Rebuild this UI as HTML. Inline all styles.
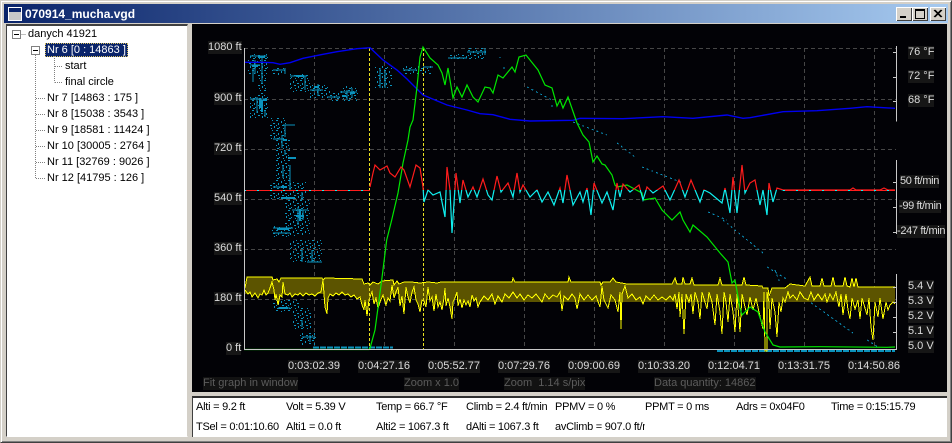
<!DOCTYPE html>
<html><head><meta charset="utf-8"><title>070914_mucha.vgd</title>
<style>
html,body{margin:0;padding:0}
body{width:952px;height:443px;background:#d4d0c8;position:relative;overflow:hidden;font-family:"Liberation Sans",sans-serif;font-size:11px;color:#000}
.a{position:absolute}
#frame{left:0;top:0;width:952px;height:443px;box-sizing:border-box;border-top:1px solid #d4d0c8;border-left:1px solid #d4d0c8;border-right:1px solid #404040;border-bottom:1px solid #404040;box-shadow:inset 1px 1px 0 #fff,inset -1px -1px 0 #808080}
#title{left:4px;top:4px;width:944px;height:19px;background:linear-gradient(90deg,#0a246a,#a6caf0)}
#tt{left:25px;top:7px;color:#fff;font-weight:bold;font-size:12px;line-height:14px;white-space:pre}
.btn{top:7px;width:16px;height:14px;box-sizing:border-box;background:#d4d0c8;box-shadow:inset 1px 1px 0 #fff,inset -1px -1px 0 #404040}
#tree{left:6px;top:24px;width:182px;height:413px;box-sizing:border-box;background:#fff;border-top:2px solid #404040;border-left:1px solid #404040;border-right:1px solid #d4d0c8;border-bottom:1px solid #fff}
#graph{left:192px;top:24px;width:755px;height:368px;background:#020206}
#status{left:192px;top:396px;width:755px;height:41px;box-sizing:border-box;background:#fff;border-top:2px solid #303030;border-left:1px solid #404040;overflow:hidden}
.t{position:absolute;white-space:pre;line-height:14px;height:14px}
.g{position:absolute;white-space:pre;line-height:13px;color:#dcdcdc;background:#161616}
.c{letter-spacing:-.35px}
.d{position:absolute;white-space:pre;line-height:13px;color:#5c5c5c;background:#121212}
.s{position:absolute;white-space:pre;line-height:14px;letter-spacing:-.25px}
svg{position:absolute;left:0;top:0}
</style></head><body>
<div class="a" id="frame"></div>
<div class="a" id="title"></div>
<svg width="952" height="24" style="z-index:2">
<rect x="8.5" y="7.5" width="13" height="13" fill="#d4d0c8" stroke="#fff"/>
<rect x="9" y="8" width="12" height="4" fill="#0a246a"/>
<rect x="9" y="12" width="12" height="8" fill="#c8c8c8"/>
</svg>
<div class="a" id="tt" style="z-index:3">070914_mucha.vgd</div>
<div class="a btn" style="left:896px"></div>
<div class="a btn" style="left:912px"></div>
<div class="a btn" style="left:930px"></div>
<svg width="952" height="24" style="z-index:4" shape-rendering="crispEdges">
<rect x="900" y="16" width="6" height="2" fill="#000"/>
<rect x="915.5" y="9.5" width="9" height="9" fill="none" stroke="#000"/><rect x="915" y="9" width="10" height="2" fill="#000"/>
<path d="M934 10l7 7M935 10l7 7M941 10l-7 7M942 10l-7 7" stroke="#000" stroke-width="1" shape-rendering="auto"/>
</svg>

<div class="a" id="tree"></div>
<div class="a" style="left:45px;top:43px;width:83px;height:14px;background:#0a246a;outline:1px dotted #d8c060;outline-offset:-1px"></div>
<svg width="200" height="200" style="z-index:2" shape-rendering="crispEdges">
<g fill="none" stroke="#808080" stroke-dasharray="1 1">
<path d="M21.5 34.5H26M35.5 55V178.5M36 98.5H45M36 114.5H45M36 130.5H45M36 146.5H45M36 162.5H45M36 178.5H45M54.5 56V82.5M55 66.5H63M55 82.5H63"/>
</g>
<rect x="12.5" y="30.5" width="8" height="8" fill="#fff" stroke="#808080"/><path d="M14 34.5h5" stroke="#000"/>
<rect x="31.5" y="46.5" width="8" height="8" fill="#fff" stroke="#808080"/><path d="M33 50.5h5" stroke="#000"/>
</svg>
<div style="z-index:3;position:absolute;left:0;top:0">
<span class="t" style="left:28px;top:27px">danych 41921</span>
<span class="t" style="left:47px;top:43px;color:#fff">Nr 6 [0 : 14863 ]</span>
<span class="t" style="left:65px;top:59px">start</span>
<span class="t" style="left:65px;top:75px">final circle</span>
<span class="t" style="left:47px;top:91px">Nr 7 [14863 : 175 ]</span>
<span class="t" style="left:47px;top:107px">Nr 8 [15038 : 3543 ]</span>
<span class="t" style="left:47px;top:123px">Nr 9 [18581 : 11424 ]</span>
<span class="t" style="left:47px;top:139px">Nr 10 [30005 : 2764 ]</span>
<span class="t" style="left:47px;top:155px">Nr 11 [32769 : 9026 ]</span>
<span class="t" style="left:47px;top:171px">Nr 12 [41795 : 126 ]</span>
</div>

<div class="a" id="graph"></div>
<div style="position:absolute;left:0;top:0">
<span class="g" style="left:208px;top:41px">1080 ft</span>
<span class="g" style="left:214px;top:92px">900 ft</span>
<span class="g" style="left:214px;top:142px">720 ft</span>
<span class="g" style="left:214px;top:192px">540 ft</span>
<span class="g" style="left:214px;top:242px">360 ft</span>
<span class="g" style="left:214px;top:292px">180 ft</span>
<span class="g" style="left:226px;top:342px">0 ft</span>
<span class="g" style="left:908px;top:46px">76 °F</span>
<span class="g" style="left:908px;top:70px">72 °F</span>
<span class="g" style="left:908px;top:94px">68 °F</span>
<span class="g c" style="left:900px;top:175px">50 ft/min</span>
<span class="g c" style="left:899px;top:200px">-99 ft/min</span>
<span class="g c" style="left:897px;top:225px">-247 ft/min</span>
<span class="g" style="left:908px;top:280px">5.4 V</span>
<span class="g" style="left:908px;top:295px">5.3 V</span>
<span class="g" style="left:908px;top:310px">5.2 V</span>
<span class="g" style="left:908px;top:325px">5.1 V</span>
<span class="g" style="left:908px;top:340px">5.0 V</span>
<span class="g" style="left:288px;top:360px">0:03:02.39</span>
<span class="g" style="left:358px;top:360px">0:04:27.16</span>
<span class="g" style="left:428px;top:360px">0:05:52.77</span>
<span class="g" style="left:498px;top:360px">0:07:29.76</span>
<span class="g" style="left:568px;top:360px">0:09:00.69</span>
<span class="g" style="left:638px;top:360px">0:10:33.20</span>
<span class="g" style="left:708px;top:360px">0:12:04.71</span>
<span class="g" style="left:778px;top:360px">0:13:31.75</span>
<span class="g" style="left:848px;top:360px">0:14:50.86</span>
<span class="d" style="left:203px;top:377px">Fit graph in window</span>
<span class="d" style="left:404px;top:377px">Zoom x 1.0</span>
<span class="d" style="left:504px;top:377px">Zoom  1.14 s/pix</span>
<span class="d" style="left:654px;top:377px">Data quantity: 14862</span>
</div>

<svg width="952" height="443" viewBox="0 0 952 443" fill="none">
<defs>
<clipPath id="up"><rect x="240" y="0" width="660" height="190"/></clipPath>
<clipPath id="dn"><rect x="240" y="190" width="660" height="200"/></clipPath>
<clipPath id="band"><path d="M245 288L247 277H272L273 280L277 279L279 282L281 278H322L323 280L325 278L362 279L364 284L368 283L370 285L373 282L378 284L382 281L393 280L394 285L397 281L399 284L404 282L411 282L420 283L428 282L437 283L441 282L512 282L513 278L515 282L568 282L569 277L571 282L600 282L601 285L603 282L610 282L613 278L616 282L627 284L672 284L675 278L677 284L682 284L683 277L685 284L690 284L692 278L694 285L718 285L720 278L722 285L742 285L744 277L746 285L762 286L763 288L768 288L769 296L772 288L785 288L790 284L805 286L810 277L812 286L820 286L822 278L824 286L831 286L833 277L835 286L843 286L845 277L847 286L850 287L852 278L854 287L856 278L858 287L895 287V360H245Z"/></clipPath>
<pattern id="sc" width="12" height="10" patternUnits="userSpaceOnUse" fill="#0b92bc" shape-rendering="crispEdges">
<rect x="0" y="0" width="2" height="1"/><rect x="5" y="1" width="1" height="2"/><rect x="8" y="0" width="1" height="1"/><rect x="2" y="3" width="1" height="2"/><rect x="9" y="3" width="2" height="1"/><rect x="0" y="5" width="1" height="1"/><rect x="6" y="5" width="2" height="1"/><rect x="3" y="7" width="1" height="1"/><rect x="10" y="6" width="1" height="2"/><rect x="1" y="8" width="2" height="1"/><rect x="7" y="8" width="1" height="1"/>
</pattern>
</defs>
<g shape-rendering="crispEdges" stroke="#464646" stroke-dasharray="4 3">
<path d="M244 48.5H896M244 99.5H896M244 149.5H896M244 199.5H896M244 249.5H896M244 299.5H896"/>
<path d="M314.5 48V349M384.5 48V349M454.5 48V349M524.5 48V349M594.5 48V349M664.5 48V349M734.5 48V349M804.5 48V349M874.5 48V349"/>
</g>
<path fill="url(#sc)" d="M248 54H268V74H248ZM250 97H268V118H250ZM258 74H266V97H258ZM270 118H286V140H270ZM276 140H290V182H276ZM270 182H306V200H270ZM285 200H310V235H285ZM272 226H295V237H272ZM290 240H322V262H290ZM273 300H300V312H273ZM293 308H312V330H293ZM300 333H316V345H300ZM272 68H285V75H272ZM290 74H310V92H290ZM310 85H330V98H310ZM327 93H358V101H327ZM340 86H358V96H340ZM375 66H392V88H375ZM402 66H432V74H402ZM448 54H486V60H448ZM468 48H486V56H468Z"/>
<g shape-rendering="crispEdges" stroke="#0b92bc">
<path d="M250 56h17M250 65h10M255 60v14M262 58v26M253 68v14M273 70h12M285 68v6M290 76h17M305 76v14M310 90h13M318 84v12M327 97h13M340 92h17M347 90v10M352 88v10M250 99h17M257 97v16M265 110v7M283 125h12M285 125v12M273 139h10M380 68v20M385 70v18M403 70h14M423 67h10M448 58h19M467 52h18M485 48v7M282 135v13M285 150v5M283 165v13M290 165v25M273 187h14M302 192v8M298 207v18M292 210h16M303 210v10M273 228h20M273 233h17M302 250v12M307 262h15M312 250v12M278 308h12M302 320v7M302 337h13M310 335v7"/>
<path stroke-width="2" d="M258 57h7M252 66h6M260 98v10M262 100v12M277 229h12M283 140h4M288 158h8M281 187h6M281 198h14M296 216h8M300 209v12M279 308h9M263 100h4M350 93h5M314 87h5M296 76h8M342 96h4"/>
<path stroke-dasharray="2 3" stroke-width="1" d="M500 57v1M503 68l5 0M527 87L552 100M552 105v2M573 122L607 135M617 143L635 157M642 167L683 183M708 212L727 220M723 220L763 253M767 267L788 280M775 270L780 283M803 297L853 333M867 340L878 347"/>
<path stroke-width="2" stroke-dasharray="6 1" d="M313 347.500H393M717 351H895"/>
</g>
<g transform="translate(0,2)">
<rect clip-path="url(#band)" transform="translate(0,-2)" x="245" y="270" width="651" height="24" fill="#5c5400"/>
<path clip-path="url(#band)" fill="#5c5400" d="M245 288L248 292L250 290L252 295L255 291L258 296L260 292L262 293L264 288L266 293L268 291L270 286L272 280L274 288L275 298L276 292L278 303L280 293L282 295L283 280L285 292L288 293L290 291L292 295L295 292L298 293L300 291L303 294L306 291L309 293L312 292L315 294L318 291L321 290L323 278L324 292L325 305L327 312L328 296L330 292L333 294L336 291L339 293L342 290L345 293L348 292L351 295L354 293L357 297L360 295L362 303L364 308L365 298L367 314L369 298L372 290L374 302L376 296L378 306L380 300L383 293L386 303L388 296L390 299L392 283L394 296L396 290L398 285L400 304L402 294L404 312L406 285L408 295L410 301L412 290L414 285L416 298L418 302L420 310L422 298L424 299L426 305L428 285L430 299L432 295L434 309L436 292L438 305L440 300L442 308L444 296L445 286L446 304L448 296L450 305L452 317L453 300L455 296L457 290L458 304L460 297L462 306L464 298L466 303L468 299L470 305L472 293L474 299L476 296L478 305L480 300L895 300V260H245Z"/>
<path stroke="#ffff00" stroke-width="1" shape-rendering="crispEdges" d="M245 288L248 292L250 290L252 295L255 291L258 296L260 292L262 293L264 288L266 293L268 291L270 286L272 280L274 288L275 298L276 292L278 303L280 293L282 295L283 280L285 292L288 293L290 291L292 295L295 292L298 293L300 291L303 294L306 291L309 293L312 292L315 294L318 291L321 290L323 278L324 292L325 305L327 312L328 296L330 292L333 294L336 291L339 293L342 290L345 293L348 292L351 295L354 293L357 297L360 295L362 303L364 308L365 298L367 314L369 298L372 290L374 302L376 296L378 306L380 300L383 293L386 303L388 296L390 299L392 283L394 296L396 290L398 285L400 304L402 294L404 312L406 285L408 295L410 301L412 290L414 285L416 298L418 302L420 310L422 298L424 299L426 305L428 285L430 299L432 295L434 309L436 292L438 305L440 300L442 308L444 296L445 286L446 304L448 296L450 305L452 317L453 300L455 296L457 290L458 304L460 297L462 306L464 298L466 303L468 299L470 305L472 293L474 299L476 296L478 305L480 300L484 294L488 298L492 292L495 302L498 294L502 300L505 292L509 296L513 290L517 296L520 292L524 298L528 293L532 296L536 292L539 296L542 300L545 292L549 297L553 293L557 295L560 290L562 309L564 294L568 298L572 292L575 296L577 307L580 292L584 298L588 293L592 298L596 294L600 305L602 284L604 298L608 306L611 293L615 298L618 310L620 290L621 327L622 292L625 284L628 296L632 292L636 298L640 295L643 302L646 294L650 298L654 293L658 298L662 295L666 298L670 294L673 298L675 292L677 307L679 290L680 315L682 292L684 332L686 292L689 300L691 292L693 312L695 290L698 300L700 317L702 290L705 300L707 307L709 290L712 300L715 323L717 292L720 310L722 332L724 290L726 300L728 320L730 292L733 310L735 330L737 292L740 330L742 292L745 305L747 313L750 295L753 308L756 296L759 310L763 327L764 290L765 349H767V290L769 300L770 327L772 296L775 310L777 335L779 300L781 310L783 296L785 300L788 290L790 296L793 293L797 298L800 290L804 296L808 298L811 290L814 298L818 292L822 298L825 292L827 300L830 292L833 298L836 290L839 305L841 292L843 313L846 292L848 308L850 317L852 296L855 307L858 298L860 317L862 296L865 306L867 313L869 296L871 325L873 338L875 300L877 310L878 315L880 296L883 317L886 300L888 308L890 303L893 300L895 302"/>
</g>
<path stroke="#ffff00" stroke-width="1" shape-rendering="crispEdges" d="M245 288L247 277H272L273 280L277 279L279 282L281 278H322L323 280L325 278L362 279L364 284L368 283L370 285L373 282L378 284L382 281L393 280L394 285L397 281L399 284L404 282L411 282L420 283L428 282L437 283L441 282L512 282L513 278L515 282L568 282L569 277L571 282L600 282L601 285L603 282L610 282L613 278L616 282L627 284L672 284L675 278L677 284L682 284L683 277L685 284L690 284L692 278L694 285L718 285L720 278L722 285L742 285L744 277L746 285L762 286L763 288L768 288L769 296L772 288L785 288L790 284L805 286L810 277L812 286L820 286L822 278L824 286L831 286L833 277L835 286L843 286L845 277L847 286L850 287L852 278L854 287L856 278L858 287L895 287"/>
<g shape-rendering="crispEdges" stroke="#e8e020" stroke-dasharray="3 2"><path d="M369.500 48V349M423.500 48V349"/></g>
<path stroke="#0000f0" stroke-width="1.4" d="M244 62.300L262 62.300L273 62.700L280 64.300L290 62.700L303 58.300L323 54.300L337 51.700L357 48.700L370 47.700L383 60L397 70L407 79L423 95L447 105L467 110L480 113.700L493 114.700L510 119.300L530 121L573 120.300L580 118.300L623 118.700L663 116.700L693 118.300L727 115L743 118.300L750 117.700L783 111.700L817 110.700L850 108.300L867 106.700L895 108.300"/>
<path stroke="#00e800" stroke-width="1.2" d="M244 349.500H369L370 348.300L375 330L381.700 280L386.700 240L391.700 220L398 193L403 163L408 140L410 127L413 120L417 87L420 57L423 47L430 58L438 65L442 73L445 85L448 68L453 98L457 87L462 97L467 85L473 97L478 102L485 87L490 88L493 93L498 75L503 78L512 67L515 72L519 57L526 55L538 70L545 85L552 88L557 106L560 100L563 108L568 97L577 123L583 135L589 142L593 162L597 156L602 164L605 165L612 175L615 185L617 187L627 185L642 193L643 200L655 198L662 210L672 220L680 212L683 220L690 232L693 225L707 237L720 253L728 262L732 283L735 280L740 308L742 315L750 307L758 312L765 332L773 345L780 347L820 346.700L887 347.300L895 347"/>
<g stroke-width="1.2">
<path clip-path="url(#up)" stroke="#ff1c1c" d="M370 187L373 173L375 165L380 170L387 166L390 173L395 177L401 167L404 170L410 187L416 165L420 168L423 187L424 202L428 190L433 195L440 192L443 207L445 217L447 167L450 190L452 233L456 173L460 203L463 180L468 197L473 187L477 197L483 179L488 195L492 200L497 176L501 192L508 183L513 197L517 173L520 192L523 185L530 197L537 190L542 202L548 192L554 205L560 188L563 203L567 175L573 205L580 192L583 202L587 188L591 215L594 183L602 203L607 192L613 210L617 183L620 197L623 184L630 192L639 185L643 200L647 187L653 193L663 186L670 200L679 180L685 197L691 180L700 202L704 190L710 193L722 203L725 188L730 213L733 177L737 213L742 165L745 193L750 183L755 180L760 205L763 190L767 215L769 183L773 202L777 188L783 190H850L853 188L856 190H880L884 188L888 190H895"/>
<path clip-path="url(#dn)" stroke="#10f0f0" d="M370 187L373 173L375 165L380 170L387 166L390 173L395 177L401 167L404 170L410 187L416 165L420 168L423 187L424 202L428 190L433 195L440 192L443 207L445 217L447 167L450 190L452 233L456 173L460 203L463 180L468 197L473 187L477 197L483 179L488 195L492 200L497 176L501 192L508 183L513 197L517 173L520 192L523 185L530 197L537 190L542 202L548 192L554 205L560 188L563 203L567 175L573 205L580 192L583 202L587 188L591 215L594 183L602 203L607 192L613 210L617 183L620 197L623 184L630 192L639 185L643 200L647 187L653 193L663 186L670 200L679 180L685 197L691 180L700 202L704 190L710 193L722 203L725 188L730 213L733 177L737 213L742 165L745 193L750 183L755 180L760 205L763 190L767 215L769 183L773 202L777 188L783 190"/>
</g>
<g shape-rendering="crispEdges">
<path stroke="#ff1c1c" stroke-width="1" d="M244 190.500H370M783 190.500H895"/>
<path stroke="#10f0f0" stroke-dasharray="2 11" d="M244 190.500H370M783 190.500H895"/>
<path stroke="#c8c8c8" d="M244.500 48V350M244 349.500H896M896.500 46V121.700M896.500 160V234M896.500 274V350M893 52.500h3M893 77.500h3M893 101.500h3M893 182.500h3M893 207.500h3M893 232.500h3M893 287.500h3M893 302.500h3M893 317.500h3M893 332.500h3"/>
</g>
</svg>

<div class="a" id="status">
<span class="s" style="left:3px;top:2px">Alti = 9.2 ft</span>
<span class="s" style="left:93px;top:2px">Volt = 5.39 V</span>
<span class="s" style="left:183px;top:2px">Temp = 66.7 °F</span>
<span class="s" style="left:273px;top:2px">Climb = 2.4 ft/min</span>
<span class="s" style="left:362px;top:2px">PPMV = 0 %</span>
<span class="s" style="left:452px;top:2px">PPMT = 0 ms</span>
<span class="s" style="left:543px;top:2px">Adrs = 0x04F0</span>
<span class="s" style="left:638px;top:2px">Time = 0:15:15.79</span>
<span class="s" style="left:3px;top:22px">TSel = 0:01:10.60</span>
<span class="s" style="left:93px;top:22px">Alti1 = 0.0 ft</span>
<span class="s" style="left:183px;top:22px">Alti2 = 1067.3 ft</span>
<span class="s" style="left:273px;top:22px">dAlti = 1067.3 ft</span>
<span class="s" style="left:362px;top:22px;width:90px;overflow:hidden">avClimb = 907.0 ft/min</span>
</div>
</body></html>
